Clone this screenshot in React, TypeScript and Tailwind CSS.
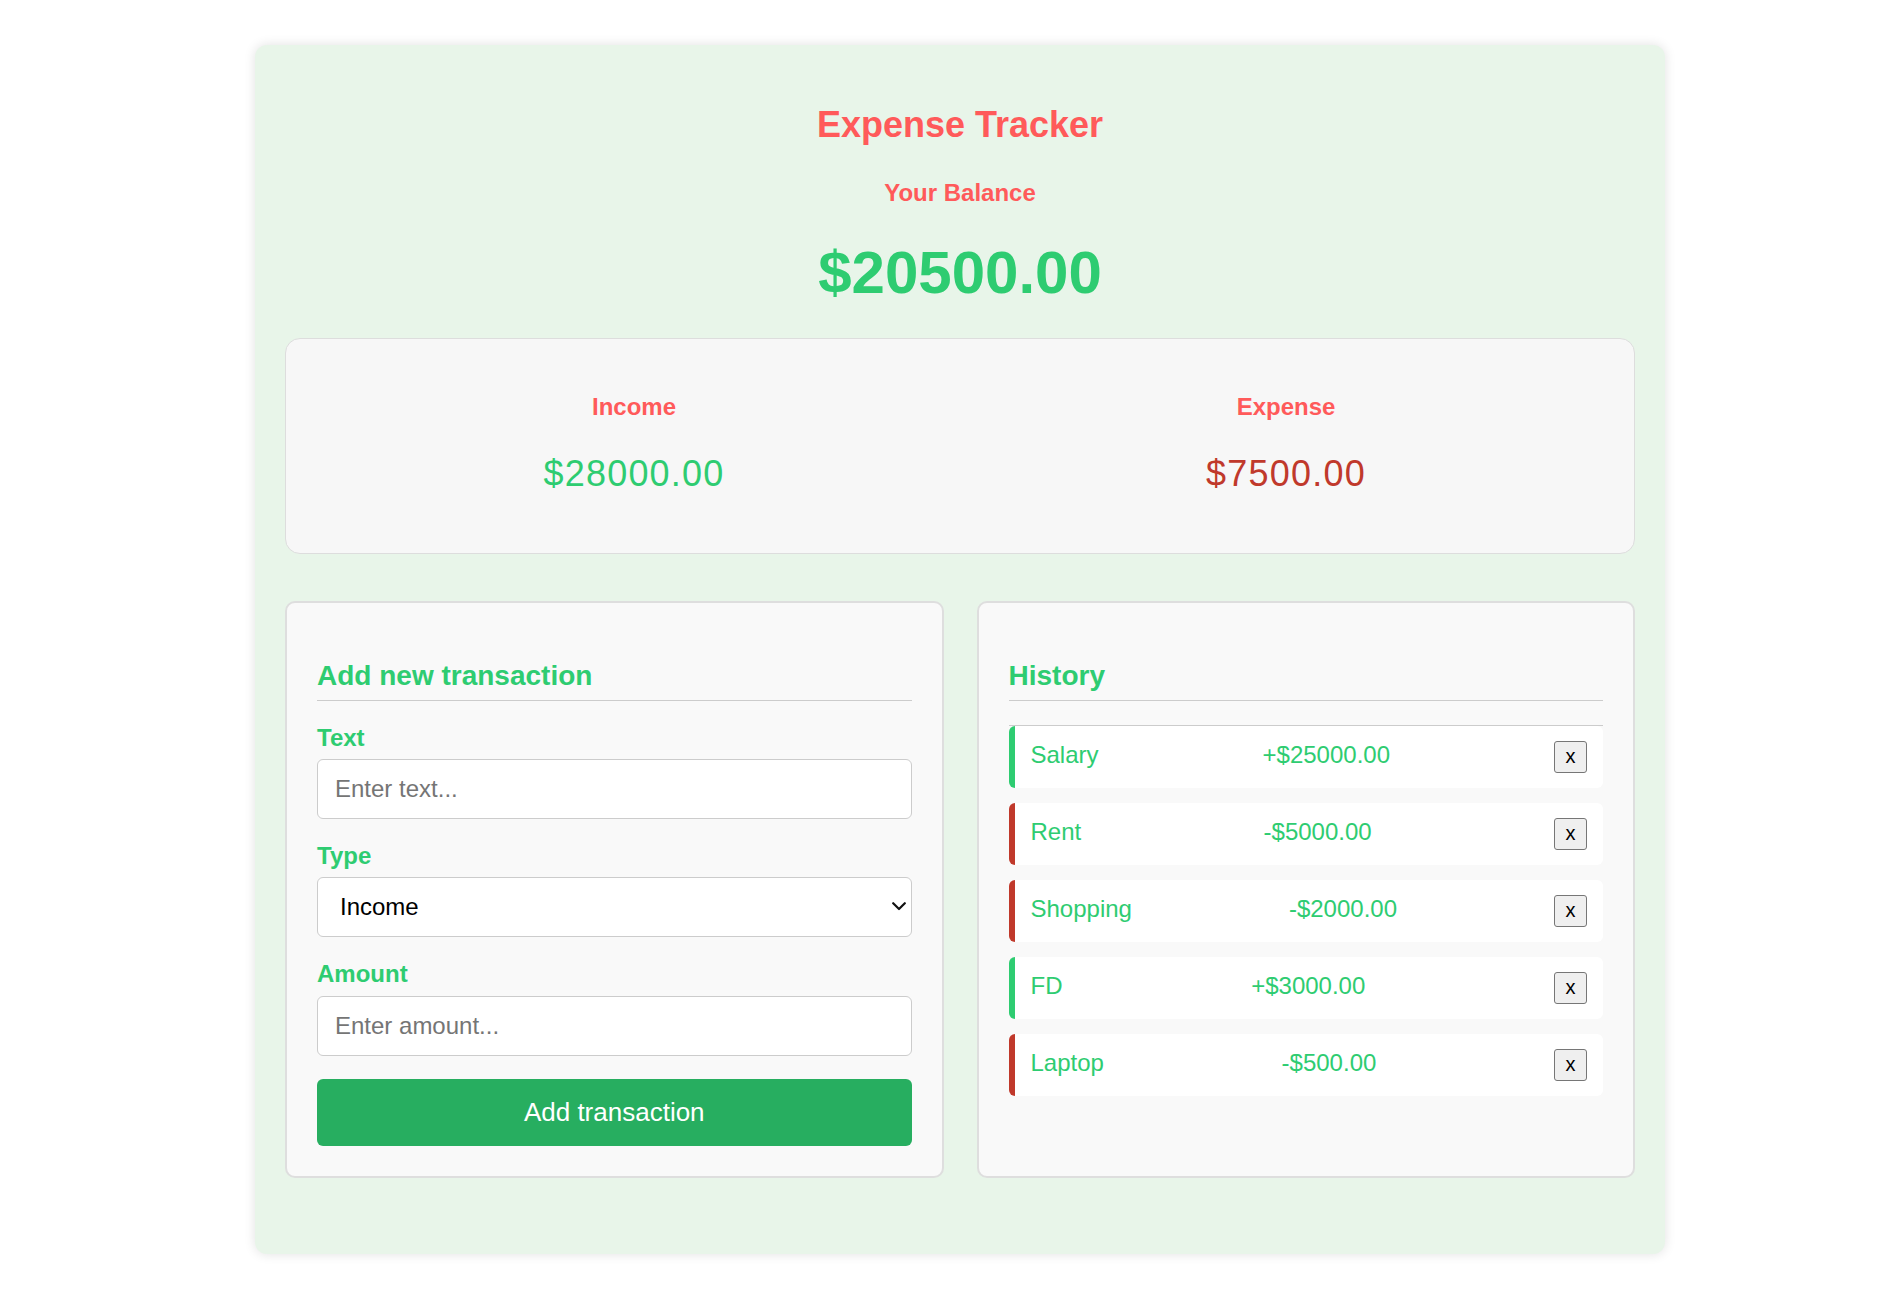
import { useState } from 'react';

interface Transaction {
  id: number;
  text: string;
  amount: number;
}

const initialTransactions: Transaction[] = [
  { id: 1, text: 'Salary', amount: 25000 },
  { id: 2, text: 'Rent', amount: -5000 },
  { id: 3, text: 'Shopping', amount: -2000 },
  { id: 4, text: 'FD', amount: 3000 },
  { id: 5, text: 'Laptop', amount: -500 },
];

export default function App() {
  const [transactions, setTransactions] = useState<Transaction[]>(initialTransactions);
  const [text, setText] = useState('');
  const [type, setType] = useState('income');
  const [amount, setAmount] = useState('');

  const income = transactions.filter(t => t.amount > 0).reduce((sum, t) => sum + t.amount, 0);
  const expense = transactions.filter(t => t.amount < 0).reduce((sum, t) => sum - t.amount, 0);
  const balance = income - expense;

  const addTransaction = () => {
    const value = parseFloat(amount);
    if (!text.trim() || isNaN(value)) return;
    setTransactions([
      ...transactions,
      { id: Date.now(), text, amount: type === 'income' ? Math.abs(value) : -Math.abs(value) },
    ]);
    setText('');
    setAmount('');
  };

  return (
    <div className="min-h-screen bg-white pt-[45px] pb-[46px] font-['Liberation_Sans',Arial,sans-serif]">
      <div className="ml-[255px] w-[1410px] rounded-[12px] bg-[#e8f5e9] px-[30px] pt-[60px] pb-[76px] shadow-[0_0_12px_rgba(0,0,0,0.12)]">
        {/* Header */}
        <h1 className="text-center text-[36px] leading-[40px] font-bold text-[#ff5a5a]">Expense Tracker</h1>
        <h4 className="mt-[34px] text-center text-[24px] leading-[28px] font-bold text-[#ff5a5a]">Your Balance</h4>
        <h2 className="mt-[31px] text-center text-[60px] leading-[70px] font-bold text-[#2ecc71]">
          ${balance.toFixed(2)}
        </h2>

        {/* Income / Expense */}
        <div className="mt-[30px] flex h-[216px] rounded-[15px] border border-[#dddddd] bg-[#f7f7f7] px-[22px]">
          <div className="flex-1 pt-[54px] text-center">
            <h4 className="text-[24px] leading-[28px] font-bold text-[#ff5a5a]">Income</h4>
            <p className="mt-[32px] text-[36px] leading-[42px] tracking-[1.2px] text-[#2ecc71]">${income.toFixed(2)}</p>
          </div>
          <div className="flex-1 pt-[54px] text-center">
            <h4 className="text-[24px] leading-[28px] font-bold text-[#ff5a5a]">Expense</h4>
            <p className="mt-[32px] text-[36px] leading-[42px] tracking-[1.2px] text-[#c0392b]">${expense.toFixed(2)}</p>
          </div>
        </div>

        <div className="mt-[47px] grid grid-cols-2 gap-[33px]">
          {/* Add new transaction */}
          <div className="rounded-[10px] border-2 border-[#dedede] bg-[#f9f9f9] px-[30px] py-[30px]">
            <h3 className="mt-[27px] border-b border-[#cccccc] pb-[8px] text-[28px] leading-[32px] font-bold text-[#2ecc71]">
              Add new transaction
            </h3>
            <div className="mt-[23px] mb-[23px]">
              <label className="mb-[7px] block text-[24px] leading-[28px] font-bold text-[#2ecc71]">Text</label>
              <input
                type="text"
                value={text}
                onChange={e => setText(e.target.value)}
                placeholder="Enter text..."
                className="block h-[60px] w-full rounded-[6px] border border-[#cccccc] bg-white pl-[17px] text-[24px] text-black outline-none placeholder:text-[#757575]"
              />
            </div>
            <div className="mb-[23px]">
              <label className="mb-[7px] block text-[24px] leading-[28px] font-bold text-[#2ecc71]">Type</label>
              <div className="relative">
                <select
                  value={type}
                  onChange={e => setType(e.target.value)}
                  className="block h-[60px] w-full appearance-none rounded-[6px] border border-[#cccccc] bg-white pl-[22px] text-[24px] text-black outline-none"
                >
                  <option value="income">Income</option>
                  <option value="expense">Expense</option>
                </select>
                <svg
                  className="pointer-events-none absolute top-[25px] right-[6px]"
                  width="14"
                  height="9"
                  viewBox="0 0 14 9"
                  fill="none"
                >
                  <path d="M1.2 1.2 L7 7 L12.8 1.2" stroke="#111" strokeWidth="2.2" strokeLinecap="round" strokeLinejoin="round" />
                </svg>
              </div>
            </div>
            <div className="mb-[23px]">
              <label className="mb-[8px] block text-[24px] leading-[28px] font-bold text-[#2ecc71]">Amount</label>
              <input
                type="number"
                value={amount}
                onChange={e => setAmount(e.target.value)}
                placeholder="Enter amount..."
                className="block h-[60px] w-full rounded-[6px] border border-[#cccccc] bg-white pl-[17px] text-[24px] text-black outline-none placeholder:text-[#757575]"
              />
            </div>
            <button
              onClick={addTransaction}
              className="block h-[67px] w-full rounded-[6px] bg-[#27ae60] text-[26px] text-white"
            >
              Add transaction
            </button>
          </div>

          {/* History */}
          <div className="rounded-[10px] border-2 border-[#dedede] bg-[#f9f9f9] px-[30px] py-[30px]">
            <h3 className="mt-[27px] border-b border-[#cccccc] pb-[8px] text-[28px] leading-[32px] font-bold text-[#2ecc71]">
              History
            </h3>
            <ul className="mt-[24px] border-t border-[#cccccc]">
              {transactions.map(t => (
                <li
                  key={t.id}
                  className={`mb-[15px] flex h-[62px] items-center justify-between rounded-[6px] border-l-[6px] bg-white pr-[16px] pl-[16px] text-[24px] text-[#2ecc71] ${
                    t.amount > 0 ? 'border-[#2ecc71]' : 'border-[#c0392b]'
                  }`}
                >
                  <span className="mb-[4px]">{t.text}</span>
                  <span className="mb-[4px]">
                    {t.amount > 0 ? '+' : '-'}${Math.abs(t.amount).toFixed(2)}
                  </span>
                  <button
                    onClick={() => setTransactions(transactions.filter(x => x.id !== t.id))}
                    className="flex h-[32px] w-[33px] items-center justify-center rounded-[3px] border border-[#767676] bg-[#efefef] pb-[2px] text-[20px] leading-none text-black"
                  >
                    x
                  </button>
                </li>
              ))}
            </ul>
          </div>
        </div>
      </div>
    </div>
  );
}
